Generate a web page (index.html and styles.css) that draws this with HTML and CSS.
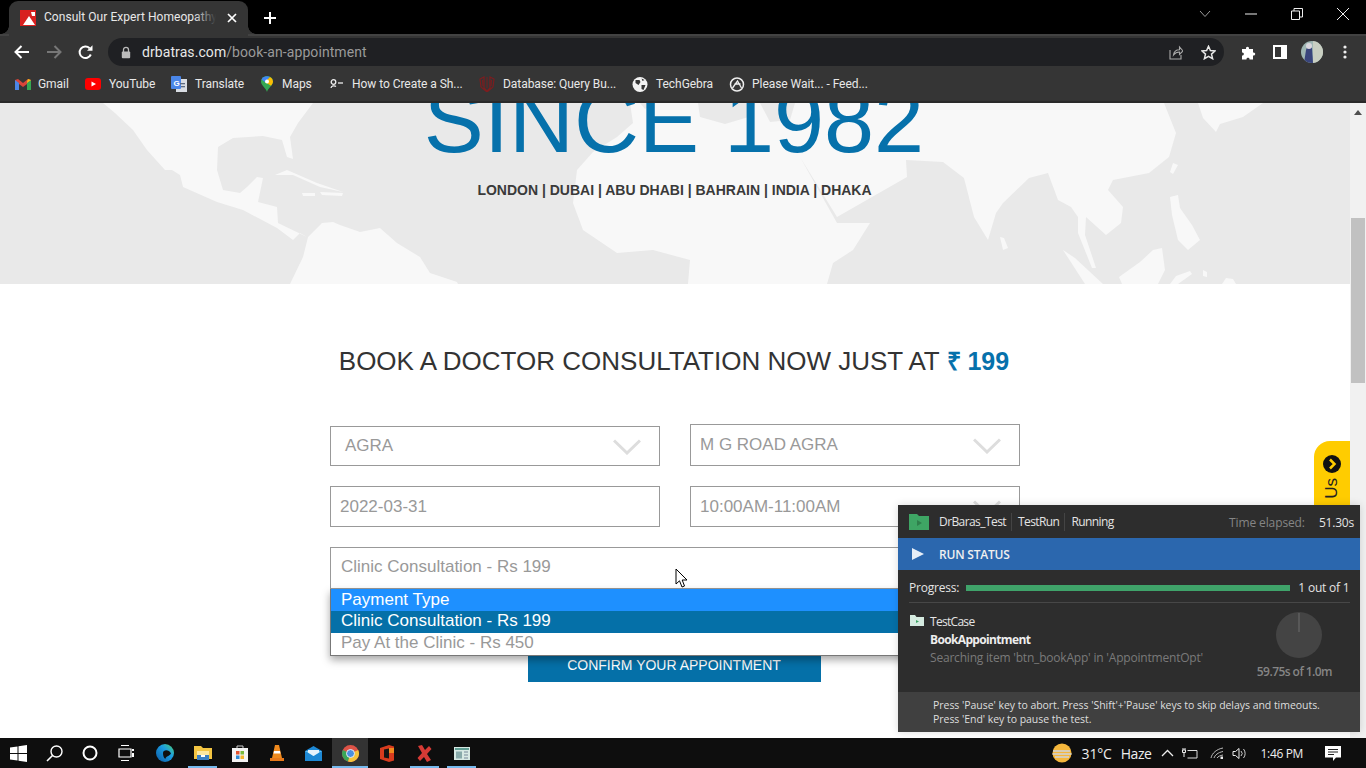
FILE: index.html
```html
<!DOCTYPE html>
<html lang="en">
<head>
<meta charset="utf-8">
<title>Consult Our Expert Homeopathy</title>
<link rel="stylesheet" href="styles.css">
</head>
<body>
<div class="screen">
  <div class="tabstrip">
    <div class="tab">
      <svg class="favicon" width="16" height="16" viewBox="0 0 16 16"><rect width="16" height="16" fill="#d8201f"/><path d="M3 15 L9 6 L15 15Z" fill="#fff"/><path d="M11 2 L15 2 L15 6 L12 6Z" fill="#fff"/></svg>
      <span class="tab-title">Consult Our Expert Homeopathy</span>
      <svg class="tab-close" width="10" height="10" viewBox="0 0 10 10"><path d="M1 1 L9 9 M9 1 L1 9" stroke="#fff" stroke-width="1.7"/></svg>
    </div>
    <svg class="newtab" width="12" height="12" viewBox="0 0 12 12"><path d="M6 0 V12 M0 6 H12" stroke="#fff" stroke-width="2"/></svg>
    <div class="winctl">
      <svg width="12" height="8" viewBox="0 0 12 8"><path d="M1 1 L6 6.500 L11 1" fill="none" stroke="#9a9a9a"/></svg>
      <svg width="12" height="2" viewBox="0 0 12 2"><path d="M0 1 H12" stroke="#eee"/></svg>
      <svg width="12" height="12" viewBox="0 0 12 12"><path d="M0.500 3 H8.500 V11.500 H0.500Z M3 3 V0.500 H11.500 V9 H8.500" fill="none" stroke="#eee"/></svg>
      <svg width="12" height="12" viewBox="0 0 12 12"><path d="M0 0 L12 12 M12 0 L0 12" stroke="#eee"/></svg>
    </div>
  </div>

  <div class="toolbar">
    <svg class="nav-back" width="16" height="14" viewBox="0 0 16 14"><path d="M15 7 H2 M7.500 1 L1.500 7 L7.500 13" fill="none" stroke="#fff" stroke-width="2"/></svg>
    <svg class="nav-fwd" width="16" height="14" viewBox="0 0 16 14"><path d="M1 7 H14 M8.500 1 L14.500 7 L8.500 13" fill="none" stroke="#777" stroke-width="2"/></svg>
    <svg class="nav-reload" width="15" height="15" viewBox="0 0 15 15"><path d="M12.800 9.500 A5.800 5.800 0 1 1 11.600 3.200" fill="none" stroke="#fff" stroke-width="2"/><path d="M9 5.800 H14.500 V0.300Z" fill="#fff"/></svg>
    <div class="omnibox">
      <svg class="lock" width="10" height="13" viewBox="0 0 10 13"><path d="M2.500 6 V3.800 A2.500 2.500 0 0 1 7.500 3.800 V6" fill="none" stroke="#bbb" stroke-width="1.300"/><rect x="0.800" y="5.500" width="8.400" height="6.800" rx="1" fill="#bbb"/></svg>
      <span class="url"><span class="url-host">drbatras.com</span>/book-an-appointment</span>
      <svg class="share" width="14" height="15" viewBox="0 0 14 15"><path d="M1 5 V14 H12 V10 M4.500 10 C5 6 8 4.800 10.500 4.800 V2 L14 6 L10.500 9.500 V7 C8 7 6 8 4.500 10Z" fill="none" stroke="#aaa" stroke-width="1.100"/></svg>
      <svg class="star" width="15" height="15" viewBox="0 0 15 15"><path d="M7.500 1.300 L9.400 5.600 L14 6 L10.500 9.100 L11.600 13.700 L7.500 11.300 L3.400 13.700 L4.500 9.100 L1 6 L5.600 5.600Z" fill="none" stroke="#e8e8e8" stroke-width="1.500"/></svg>
    </div>
    <svg class="puzzle" width="15" height="15" viewBox="0 0 15 15"><path d="M1 4 H5 C4.500 1 8.500 1 8 4 H12 V7.500 C15 7 15 11 12 10.500 V14.500 H8.500 C9 12 5 12 5.500 14.500 H1 V10.500 C3.500 11 3.500 7 1 7.500Z" fill="#fff"/></svg>
    <svg class="panel" width="14" height="14" viewBox="0 0 14 14"><rect x="1" y="1" width="12" height="12" fill="none" stroke="#fff" stroke-width="2"/><rect x="8" y="1" width="5" height="12" fill="#fff"/></svg>
    <svg class="avatar" width="22" height="22" viewBox="0 0 22 22"><defs><clipPath id="av"><circle cx="11" cy="11" r="11"/></clipPath></defs><g clip-path="url(#av)"><rect width="22" height="22" fill="#9fb7b4"/><rect x="12" width="10" height="22" fill="#c9cfc2"/><path d="M3 22 L5 9 L7 4 L11 7 L12 22Z" fill="#39457c"/><circle cx="8" cy="5" r="3" fill="#d9d6dd"/></g></svg>
    <svg class="kebab" width="4" height="14" viewBox="0 0 4 14"><circle cx="2" cy="2" r="1.600" fill="#eee"/><circle cx="2" cy="7" r="1.600" fill="#eee"/><circle cx="2" cy="12" r="1.600" fill="#eee"/></svg>
  </div>

  <div class="bookmarks">
    <div class="bm">
      <svg width="16" height="12" viewBox="0 0 16 12"><path d="M0 12 V2 L3 1 L8 5 L13 1 L16 2 V12 H12 V6 L8 9 L4 6 V12Z" fill="#d9453a"/><path d="M0 12 V2 L4 5 V12Z" fill="#4b86e8"/><path d="M12 12 V5 L16 2 V12Z" fill="#35a853"/><path d="M13 1 L16 2 L12 5 V3.500Z" fill="#f6bb18"/></svg>
      <span>Gmail</span>
    </div>
    <div class="bm bm-wide">
      <svg width="16" height="12" viewBox="0 0 16 12"><rect width="16" height="12" rx="3" fill="#f00"/><path d="M6.500 3.500 L11 6 L6.500 8.500Z" fill="#fff"/></svg>
      <span>YouTube</span>
    </div>
    <div class="bm bm-wide">
      <svg width="16" height="16" viewBox="0 0 16 16"><rect x="5" y="3" width="11" height="13" fill="#d9dde3"/><rect width="10" height="13" rx="1" fill="#4a86e8"/><text x="2.500" y="9.500" class="gt">G</text><rect x="9" y="7" width="5" height="1.300" fill="#5d6b82"/><rect x="10" y="10" width="4" height="1.300" fill="#5d6b82"/></svg>
      <span>Translate</span>
    </div>
    <div class="bm">
      <svg width="12" height="16" viewBox="0 0 12 16"><path d="M6 16 C5 12 0 9.500 0 5.500 A6 5.500 0 0 1 12 5.500 C12 9.500 7 12 6 16Z" fill="#34a853"/><path d="M0.500 3.500 A6 5.500 0 0 1 9 1 L4 6Z" fill="#4285f4"/><path d="M9 1 A6 5.500 0 0 1 12 5.500 C12 7 11 8.500 10 9.800 L4 6Z" fill="#fbbc04"/><circle cx="6" cy="5.500" r="2" fill="#fff"/></svg>
      <span>Maps</span>
    </div>
    <div class="bm">
      <svg width="16" height="12" viewBox="0 0 16 12"><circle cx="4.500" cy="4" r="2.300" fill="none" stroke="#eee" stroke-width="1.300"/><path d="M2 10 A3 2.500 0 0 1 7 8.500" fill="none" stroke="#eee" stroke-width="1.300"/><path d="M9 5 H14" stroke="#eee" stroke-width="1.300"/></svg>
      <span>How to Create a Sh...</span>
    </div>
    <div class="bm bm-wide">
      <svg width="16" height="16" viewBox="0 0 16 16"><path d="M1 3 L5 1 L5 12 L8 15 L11 12 L11 1 L15 3 L14 11 L8 16 L2 11Z" fill="none" stroke="#7c1d1f" stroke-width="1.200"/><path d="M8 1 V12 M3.500 4 L4 10 M12.500 4 L12 10" stroke="#7c1d1f"/></svg>
      <span>Database: Query Bu...</span>
    </div>
    <div class="bm bm-wide">
      <svg width="15" height="15" viewBox="0 0 15 15"><circle cx="7.500" cy="7.500" r="7.500" fill="#f2f2f2"/><path d="M3 3 L7 3 L8 5 L6 8 L3 6Z M9 8 L13 8 L11 13 L9 12Z M9 1.500 L12 3 L10 4Z" fill="#353535"/></svg>
      <span>TechGebra</span>
    </div>
    <div class="bm">
      <svg width="15" height="15" viewBox="0 0 15 15"><circle cx="7.500" cy="7.500" r="6.500" fill="none" stroke="#eee" stroke-width="1.500"/><path d="M3 11 L8 4 L12 11 M5 7 H11" fill="none" stroke="#eee" stroke-width="1.300"/></svg>
      <span>Please Wait... - Feed...</span>
    </div>
  </div>

  <div class="viewport">
    <main class="page">
      <section class="hero">
        <svg class="map" viewBox="0 103 1350 181" preserveAspectRatio="none">
          <g fill="#f8f8f8">
            <path d="M103 103 L115 113 L133 130 L147 150 L165 170 L172 170 L180 175 L183 187 L217 202 L243 210 L277 228 L293 240 L300 233 L307 237 L278 223 L277 207 L258 202 L263 178 L257 177 L247 187 L240 193 L223 190 L217 170 L218 147 L233 138 L263 136 L282 140 L287 157 L293 159 L290 137 L298 123 L313 103Z"/>
            <path d="M290 284 L303 257 L308 237 L322 223 L333 222 L340 225 L360 232 L380 228 L397 243 L420 257 L430 273 L457 282 L458 284Z"/>
            <path d="M275 175 L287 170 L317 183 L343 192 L320 187 L293 175Z"/>
            <path d="M302 193 L315 193 L315 196 L303 196Z M320 192 L343 193 L342 196 L322 195Z M811 194 L819 193 L819 195 L812 196Z"/>
            <path d="M630 103 L633 123 L617 137 L593 152 L577 170 L573 203 L583 230 L617 253 L653 250 L690 260 L688 284 L827 284 L833 263 L853 250 L870 223 L837 223 L800 157 L837 217 L907 177 L906 160 L943 162 L964 178 L974 217 L988 240 L996 213 L1003 203 L1029 178 L1048 173 L1058 200 L1071 207 L1078 217 L1078 233 L1092 268 L1096 268 L1085 235 L1086 217 L1106 235 L1121 223 L1123 207 L1108 190 L1113 180 L1149 173 L1169 157 L1176 133 L1164 103Z"/>
            <path d="M1000 237 L1004 238 L1008 248 L1003 250Z"/>
            <path d="M1198 103 L1203 118 L1216 132 L1220 124 L1243 117 L1263 103Z"/>
            <path d="M1173 163 L1178 165 L1173 174 L1170 172Z"/>
            <path d="M1170 197 L1178 195 L1180 208 L1192 225 L1200 240 L1188 250 L1178 240 L1172 215Z"/>
            <path d="M1119 277 L1140 262 L1153 250 L1162 248 L1165 270 L1158 284 L1122 284Z"/>
            <path d="M1063 250 L1075 258 L1103 284 L1085 284Z"/>
            <path d="M1170 284 L1176 276 L1190 271 L1192 274 L1178 284Z M1203 270 L1207 272 L1207 277 L1203 276Z M1222 284 L1226 278 L1233 279 L1236 284Z"/>
            <path d="M783 284 L787 276 L793 276 L790 284Z"/>
          </g>
          <g fill="#e9e9e9">
            <path d="M698 103 L755 103 L752 116 L725 124 L700 117Z"/>
            <path d="M760 103 L795 103 L790 120 L770 122Z"/>
            <path d="M640 103 L655 103 L645 109Z"/>
          </g>
        </svg>
        <h1 class="since">SINCE 1982</h1>
        <p class="cities">LONDON | DUBAI | ABU DHABI | BAHRAIN | INDIA | DHAKA</p>
      </section>
      <section class="booking">
        <h2 class="book-title">BOOK A DOCTOR CONSULTATION NOW JUST AT <span class="price">₹ 199</span></h2>
        <form class="form">
          <div class="field field-short field-pad"><span>AGRA</span><svg class="chev" width="28" height="16" viewBox="0 0 28 16"><path d="M1 1.500 L14 14 L27 1.500" fill="none" stroke="#ddd" stroke-width="3"/></svg></div>
          <div class="field field-tall"><span class="raise">M G ROAD AGRA</span><svg class="chev" width="28" height="16" viewBox="0 0 28 16"><path d="M1 1.500 L14 14 L27 1.500" fill="none" stroke="#ddd" stroke-width="3"/></svg></div>
          <div class="field"><span>2022-03-31</span></div>
          <div class="field"><span>10:00AM-11:00AM</span><svg class="chev" width="28" height="16" viewBox="0 0 28 16"><path d="M1 1.500 L14 14 L27 1.500" fill="none" stroke="#ddd" stroke-width="3"/></svg></div>
          <div class="field field-wide">
            <span class="raise-small">Clinic Consultation - Rs 199</span>
            <ul class="options">
              <li class="opt-hover">Payment Type</li>
              <li class="opt-selected">Clinic Consultation - Rs 199</li>
              <li class="opt-plain">Pay At the Clinic - Rs 450</li>
            </ul>
          </div>
        </form>
        <button class="confirm" type="button">CONFIRM YOUR APPOINTMENT</button>
      </section>
      <div class="side-tab">
        <svg width="18" height="18" viewBox="0 0 18 18"><circle cx="9" cy="9" r="9" fill="#111"/><path d="M7 4.500 L11.500 9 L7 13.500" fill="none" stroke="#ffcc00" stroke-width="2.500"/></svg>
        <span class="side-text">Us</span>
      </div>
      <svg class="cursor" width="14" height="21" viewBox="0 0 14 21"><path d="M1 1 V16 L4.500 12.800 L7 19 L9.500 18 L7.200 12 L12 12Z" fill="#fff" stroke="#000"/></svg>
    </main>
    <aside class="scrollbar">
      <svg class="sb-up" width="8" height="5" viewBox="0 0 8 5"><path d="M4 0 L8 5 H0Z" fill="#505050"/></svg>
      <div class="sb-thumb"></div>
    </aside>

    <div class="runner">
      <div class="run-head">
        <svg width="20" height="16" viewBox="0 0 20 16"><path d="M0 0 H8 L10 2 H20 V16 H0Z" fill="#3ea564"/><path d="M8 6 L13 9 L8 12Z" fill="#2f7f4c"/></svg>
        <span class="crumb crumb-first">DrBaras_Test</span>
        <span class="crumb">TestRun</span>
        <span class="crumb crumb-last">Running</span>
        <span class="elapsed-label">Time elapsed:</span>
        <span class="elapsed">51.30s</span>
      </div>
      <div class="run-status">
        <svg width="12" height="12" viewBox="0 0 12 12"><path d="M0 0 L12 6 L0 12Z" fill="#e6eef7"/></svg>
        <strong>RUN STATUS</strong>
      </div>
      <div class="run-progress">
        <span>Progress:</span>
        <div class="bar"></div>
        <span class="count">1 out of 1</span>
      </div>
      <div class="run-body">
        <div class="case">
          <svg class="case-icon" width="14" height="11" viewBox="0 0 14 11"><path d="M0 0 H5 L6.500 2 H14 V11 H0Z" fill="#d5ebe0"/><path d="M6 5 L9 6.500 L6 8Z" fill="#3ea564"/></svg>
          <div class="case-text">
            <div class="case-kind">TestCase</div>
            <div class="case-name">BookAppointment</div>
            <div class="case-info">Searching item 'btn_bookApp' in 'AppointmentOpt'</div>
          </div>
        </div>
        <div class="timer">
          <svg class="timer-dial" width="46" height="46" viewBox="0 0 46 46"><circle cx="23" cy="23" r="23" fill="#444"/><path d="M23 1 V20" stroke="#6d6d6d"/></svg>
          <span class="timer-text">59.75s of 1.0m</span>
        </div>
      </div>
      <div class="run-foot">Press 'Pause' key to abort. Press 'Shift'+'Pause' keys to skip delays and timeouts.<br>Press 'End' key to pause the test.</div>
    </div>
  </div>

  <footer class="taskbar">
    <div class="task-icons">
      <div class="ti"><svg width="17" height="17" viewBox="0 0 17 17"><path d="M0 2.500 L7.500 1.400 V8 H0Z M8.500 1.200 L17 0 V8 H8.500Z M0 9 H7.500 V15.600 L0 14.500Z M8.500 9 H17 V17 L8.500 15.800Z" fill="#fff"/></svg></div>
      <div class="ti"><svg width="17" height="17" viewBox="0 0 17 17"><circle cx="10.500" cy="6.500" r="5.500" fill="none" stroke="#fff" stroke-width="1.400"/><path d="M6.500 10.500 L1 16" stroke="#fff" stroke-width="1.600"/></svg></div>
      <div class="ti"><svg width="16" height="16" viewBox="0 0 16 16"><circle cx="8" cy="8" r="6.500" fill="none" stroke="#fff" stroke-width="2"/></svg></div>
      <div class="ti"><svg width="16" height="16" viewBox="0 0 16 16"><path d="M3 0.500 H11 M3 15.500 H11 M1 4 H13 V12 H1Z" fill="none" stroke="#fff" stroke-width="1.200"/><rect x="14" y="4" width="2" height="2" fill="#fff"/><rect x="14" y="8" width="2" height="4" fill="#fff"/></svg></div>
      <div class="ti"><svg width="18" height="18" viewBox="0 0 18 18"><defs><linearGradient id="eg" x1="0" y1="1" x2="1" y2="0"><stop offset="0" stop-color="#0c59a4"/><stop offset="0.600" stop-color="#1b9de2"/><stop offset="1" stop-color="#4fd26f"/></linearGradient></defs><circle cx="9" cy="9" r="9" fill="url(#eg)"/><path d="M7 9 C7 5.500 13 5 15 9.500 C14 12 9 12.500 9.500 15 C7.500 14 7 11 7 9Z" fill="#101010"/></svg></div>
      <div class="ti ti-run"><svg width="18" height="16" viewBox="0 0 18 16"><path d="M0 1 H7 L9 3 H18 V14 H0Z" fill="#f4c542"/><rect x="3" y="6" width="12" height="4" fill="#fde7a0"/><rect x="3" y="10" width="12" height="5" fill="#3c80c4"/><rect x="7" y="10" width="4" height="2" fill="#fff"/></svg></div>
      <div class="ti"><svg width="16" height="17" viewBox="0 0 16 17"><path d="M0 3 H16 V17 H0Z" fill="#f3f3f3"/><path d="M5 3 V1 H11 V3" fill="none" stroke="#ccc"/><rect x="4" y="6" width="3.500" height="3.500" fill="#e2532f"/><rect x="8.500" y="6" width="3.500" height="3.500" fill="#79b93a"/><rect x="4" y="10.500" width="3.500" height="3.500" fill="#2d8ad6"/><rect x="8.500" y="10.500" width="3.500" height="3.500" fill="#f4b42b"/></svg></div>
      <div class="ti"><svg width="16" height="18" viewBox="0 0 16 18"><path d="M6 1 H10 L13 14 H3Z" fill="#f08a1d"/><path d="M5 7 H11 L11.500 9.500 H4.500Z" fill="#fff"/><rect x="1" y="14" width="14" height="3" fill="#e8791a"/></svg></div>
      <div class="ti"><svg width="17" height="15" viewBox="0 0 17 15"><path d="M0 5 L8.500 0 L17 5 V15 H0Z" fill="#1d88d4"/><path d="M0 5 L8.500 10 L17 5" fill="#6cc3f2"/><path d="M3 4 H14 V6.500 L8.500 10 L3 6.500Z" fill="#e7f3fb"/></svg></div>
      <div class="ti ti-active ti-run"><svg width="17" height="17" viewBox="0 0 17 17"><circle cx="8.500" cy="8.500" r="8.500" fill="#de5347"/><path d="M8.500 8.500 L0.800 5 A8.500 8.500 0 0 0 6 16.600Z" fill="#3aa757"/><path d="M8.500 8.500 L16.200 5 A8.500 8.500 0 0 1 6 16.600Z" fill="#f5c33b"/><circle cx="8.500" cy="8.500" r="4" fill="#4a8fe0" stroke="#eee"/></svg></div>
      <div class="ti"><svg width="14" height="17" viewBox="0 0 14 17"><path d="M0 3 L9 0 L14 1.500 V15.500 L9 17 L0 14Z" fill="#d83b1e"/><path d="M4 4.500 L9 3.500 V13.500 L4 12.500Z" fill="#141414"/><rect x="9" y="3" width="5" height="5" fill="#f08a1d"/></svg></div>
      <div class="ti ti-run"><svg width="15" height="17" viewBox="0 0 15 17"><path d="M1 1 L5 0 L8 5 L12 1 L14.500 4 L10 9 L14 15 L10 17 L7 12 L3 16 L0.500 13 L5 8Z" fill="#d63a35"/></svg></div>
      <div class="ti ti-run"><svg width="16" height="13" viewBox="0 0 16 13"><rect width="16" height="13" fill="#d7e9e4"/><rect x="1" y="1" width="14" height="2" fill="#5f9d93"/><rect x="2" y="4.500" width="6" height="7" fill="#8aa"/><path d="M10 5 H14 M10 8 H14 M10 11 H14" stroke="#789"/></svg></div>
    </div>
    <div class="tray">
      <svg class="tray-sun" width="20" height="20" viewBox="0 0 20 20"><circle cx="10" cy="10" r="9.500" fill="#f5b73c"/><path d="M1 8 H18 M0.500 11 H19.500 M3 14 H17" stroke="#d9cdb3" stroke-width="1.800"/></svg>
      <span class="tray-temp">31°C</span>
      <span class="tray-haze">Haze</span>
      <svg class="tray-caret" width="13" height="8" viewBox="0 0 13 8"><path d="M1 7 L6.500 1.500 L12 7" fill="none" stroke="#eee" stroke-width="1.300"/></svg>
      <svg class="tray-batt" width="16" height="12" viewBox="0 0 16 12"><path d="M5.500 3.500 H15 V11 H5.500" fill="none" stroke="#ddd"/><path d="M1 3 V1 M3 3 V1 M0.500 3 H3.500 V5.500 H0.500Z M2 5.500 V10" fill="none" stroke="#eee"/></svg>
      <svg class="tray-wifi" width="14" height="12" viewBox="0 0 14 12"><path d="M1 11 C2 6 7 2 13 1 M4 11 C5 8 8 5.500 13 4.500 M7 11 C8 9.500 10 8.500 13 8" fill="none" stroke="#bbb"/><rect x="10.500" y="9.500" width="2.500" height="2.500" fill="#eee"/></svg>
      <svg class="tray-sound" width="15" height="13" viewBox="0 0 15 13"><path d="M1 4.500 H3.500 L7 1.500 V11.500 L3.500 8.500 H1Z" fill="none" stroke="#eee"/><path d="M9 4 A3.500 3.500 0 0 1 9 9 M11.500 2 A7 7 0 0 1 11.500 11" fill="none" stroke="#ccc"/></svg>
      <span class="tray-time">1:46 PM</span>
      <svg class="tray-note" width="16" height="15" viewBox="0 0 16 15"><path d="M0 0 H16 V11.500 H11 L8 15 V11.500 H0Z" fill="#fff"/><path d="M3 3.500 H13 M3 6 H13 M3 8.500 H9" stroke="#222"/></svg>
    </div>
  </footer>
</div>
</body>
</html>
```
FILE: styles.css
```css
* { box-sizing: border-box; }
html, body { margin: 0; padding: 0; height: 100%; overflow: hidden; background: #000; }
body { font-family: "Liberation Sans", Arial, sans-serif; }
.screen { width: 1366px; height: 768px; display: flex; flex-direction: column; overflow: hidden; }

/* tab strip */
.tabstrip { height: 34px; background: #000; display: flex; align-items: flex-end; padding-left: 9px; flex: none; }
.tab { width: 239px; height: 35px; margin-bottom: -2px; padding: 0 11px 2px; background: #353535; border-radius: 9px 9px 0 0; display: flex; align-items: center; color: #e8e8e8; font: 12px "Roboto", sans-serif; position: relative; z-index: 1; flex: none; }
.tab::before, .tab::after { content: ""; position: absolute; bottom: 2px; width: 8px; height: 8px; }
.tab::before { left: -8px; background: radial-gradient(circle at 0 0, rgba(53,53,53,0) 7.500px, #353535 8px); }
.tab::after { right: -8px; background: radial-gradient(circle at 100% 0, rgba(53,53,53,0) 7.500px, #353535 8px); }
.favicon { flex: none; }
.tab-title { margin: -1px 0 0 8px; width: 172px; overflow: hidden; white-space: nowrap; position: relative; letter-spacing: 0.05px; }
.tab-title::after { content: ""; position: absolute; top: 0; right: 0; width: 22px; height: 100%; background: linear-gradient(to right, rgba(53,53,53,0), #353535); }
.tab-close { margin-left: 11px; flex: none; }
.newtab { margin: 0 0 10px 16px; flex: none; }
.winctl { margin-left: auto; width: 167px; height: 28px; margin-bottom: 6px; padding: 0 17px 0 0; display: flex; align-items: center; justify-content: space-between; align-self: flex-start; flex: none; }

/* toolbar */
.toolbar { height: 35px; background: #353535; border-top: 2px solid #424242; padding-bottom: 1px; display: flex; align-items: center; flex: none; }
.nav-back { margin-left: 14px; flex: none; }
.nav-fwd { margin-left: 16px; flex: none; }
.nav-reload { margin-left: 16px; flex: none; }
.omnibox { margin-left: 15px; width: 1116px; height: 28px; border-radius: 14px; background: #1f2023; display: flex; align-items: center; padding: 0 9px 0 13px; flex: none; }
.lock { flex: none; }
.url { margin-left: 11px; font: 14px "Roboto", sans-serif; color: #9a9a9a; white-space: nowrap; letter-spacing: 0.08px; }
.url-host { color: #e8e8e8; }
.share { margin-left: auto; flex: none; }
.star { margin-left: 18px; margin-right: -1px; flex: none; }
.puzzle { margin-left: 17px; flex: none; }
.panel { margin-left: 17px; flex: none; }
.avatar { margin-left: 14px; flex: none; }
.kebab { margin-left: 20px; flex: none; }

/* bookmarks */
.bookmarks { height: 34px; background: #353535; border-bottom: 2px solid #2a2a2a; padding: 0 0 2px 15px; display: grid; grid-template-columns: 70px 86px 88px 70px 150px 153px 97px auto; align-items: center; flex: none; }
.bm { display: flex; align-items: center; color: #e8e8e8; font: 12px "Roboto", sans-serif; white-space: nowrap; letter-spacing: -0.05px; }
.bm svg { width: 16px; margin-right: 7px; flex: none; }
.bm-wide svg { margin-right: 8px; }
.gt { font: bold 8px "Liberation Sans", sans-serif; fill: #fff; }

/* viewport */
.viewport { flex: 1; display: flex; position: relative; min-height: 0; background: #fff; }
.page { flex: 1; position: relative; overflow: hidden; background: #fff; }
.scrollbar { width: 16px; background: #f1f1f1; flex: none; display: flex; flex-direction: column; align-items: center; padding-top: 7px; }
.sb-thumb { width: 14px; height: 165px; background: #c1c1c1; margin-top: 103px; }

.hero { height: 181px; position: relative; overflow: hidden; background: #e9e9e9; text-align: center; }
.map { position: absolute; left: 0; top: 0; width: 100%; height: 100%; }
.since { position: relative; margin: -27px 2px 0 0; font-size: 90px; line-height: 90px; font-weight: 400; color: #0671ab; }
.cities { position: relative; margin: 16px 1px 0 0; font-size: 14px; line-height: 16px; font-weight: 700; color: #3a3a3a; }

.booking { display: flex; flex-direction: column; align-items: center; }
.book-title { margin: 62px 2px 48px 0; font-size: 26px; line-height: 30px; font-weight: 400; color: #333; white-space: nowrap; }
.price { color: #0671ab; font-weight: 700; font-size: 25px; }
.form { width: 690px; display: grid; grid-template-columns: 330px 330px; column-gap: 30px; row-gap: 20px; align-items: end; }
.field { height: 41px; border: 1px solid #999; background: #fff; display: flex; align-items: center; justify-content: space-between; padding: 0 18px 0 9px; font-size: 17px; color: #999; position: relative; }
.field-short { height: 40px; }
.field-pad { padding-left: 14px; }
.field-tall { height: 42px; }
.raise { margin-top: -1px; }
.raise-small { margin-top: -2px; }
.field-wide { grid-column: 1 / 3; height: 42px; padding-left: 10px; }
.chev { flex: none; margin-top: 2px; }
.options { position: absolute; left: -1px; right: -1px; top: 41px; margin: 0; padding: 0; list-style: none; background: #fff; border: 1px solid #777; border-top: 0; box-shadow: 0 4px 8px rgba(0,0,0,.35); font-size: 17px; z-index: 2; }
.options li { height: 22px; line-height: 21px; padding-left: 10px; }
.options .opt-selected, .options .opt-plain { line-height: 19px; }
.opt-hover { background: #1e90ff; color: #fff; }
.opt-selected { background: #0570a8; color: #fff; }
.opt-plain { color: #999; }
.confirm { margin: 61px 2px 0 0; width: 293px; height: 32px; border: 0; background: #0570a8; color: #fff; font: 14px "Liberation Sans", sans-serif; padding: 0 0 2px; }

.side-tab { position: absolute; right: 0; top: 338px; width: 36px; height: 64px; background: #ffcc00; border-radius: 16px 0 0 0; display: flex; flex-direction: column; align-items: center; padding: 14px 1px 0 0; gap: 5px; }
.side-text { writing-mode: vertical-rl; transform: rotate(180deg); font-size: 17px; color: #222; line-height: 18px; }
.cursor { position: absolute; left: 675px; top: 465px; z-index: 5; }
.sb-up { flex: none; }

/* runner window */
.runner { position: absolute; left: 898px; top: 402px; width: 462px; height: 227px; background: #2d2d2d; color: #e4e4e4; font: 12px "Open Sans", sans-serif; letter-spacing: -0.2px; display: flex; flex-direction: column; z-index: 6; box-shadow: 0 0 8px rgba(0,0,0,.15); }
.run-head { height: 33px; padding: 1px 6px 0 11px; display: flex; align-items: center; flex: none; }
.crumb { padding: 0 5px; border-right: 1px solid #444; line-height: 18px; letter-spacing: -0.58px; }
.crumb + .crumb { padding-left: 6px; }
.crumb-first { margin-left: 5px; }
.crumb-last { border-right: 0; }
.elapsed-label { margin-left: auto; color: #858585; letter-spacing: -0.12px; }
.elapsed { margin-left: 14px; }
.run-status { height: 32px; background: #2b67ae; display: flex; align-items: center; padding-left: 14px; flex: none; }
.run-status strong { margin-left: 15px; font-weight: 600; color: #f0f0f0; }
.run-progress { height: 33px; margin: 0 10px 0 11px; padding-top: 3px; border-bottom: 1px solid #474747; display: flex; align-items: center; flex: none; }
.bar { margin-left: 7px; width: 324px; height: 6px; background: #3fa36a; flex: none; }
.count { margin-left: 8px; white-space: nowrap; }
.run-body { flex: 1; display: flex; justify-content: space-between; padding: 10px 28px 0 12px; }
.case { display: flex; }
.case-icon { margin-top: 2px; flex: none; }
.case-text { margin-left: 6px; line-height: 18px; }
.case-kind { letter-spacing: -0.7px; }
.case-name { font-weight: 700; color: #eee; letter-spacing: -0.65px; }
.case-info { color: #7a7a7a; }
.timer { display: flex; flex-direction: column; align-items: flex-end; margin-top: -1px; }
.timer-dial { margin-right: 10px; }
.timer-text { color: #858585; margin-top: 5px; font-weight: 600; white-space: nowrap; letter-spacing: -0.55px; }
.run-foot { height: 40px; background: #404040; padding: 6px 0 0 35px; font-size: 10.500px; line-height: 14px; color: #dedede; flex: none; white-space: nowrap; letter-spacing: -0.04px; }

/* taskbar */
.taskbar { height: 30px; background: #0e0e0e; display: flex; align-items: stretch; justify-content: space-between; flex: none; color: #eee; }
.task-icons { display: grid; grid-template-columns: 36px 37px 34px 38px 39px 37px 37px 37px 37px 36px 38px 37px 37px; }
.ti { display: flex; align-items: center; justify-content: center; position: relative; }
.ti-active { background: #333; }
.ti-run::after { content: ""; position: absolute; left: 4px; right: 4px; bottom: 0; height: 2px; background: #76b9ed; }
.ti-active::after { left: 0; right: 0; }
.tray { display: flex; align-items: center; padding-right: 25px; }
.tray svg { flex: none; }
.tray-temp { margin-left: 10px; font: 14px "Open Sans", sans-serif; letter-spacing: -0.2px; }
.tray-haze { margin-left: 9px; font: 14px "Open Sans", sans-serif; letter-spacing: -0.4px; }
.tray-caret { margin-left: 9px; }
.tray-batt { margin-left: 8px; }
.tray-wifi { margin-left: 12px; }
.tray-sound { margin-left: 8px; }
.tray-time { margin-left: 14px; font: 12px "Open Sans", sans-serif; letter-spacing: -0.35px; white-space: nowrap; }
.tray-note { margin-left: 22px; }
```
